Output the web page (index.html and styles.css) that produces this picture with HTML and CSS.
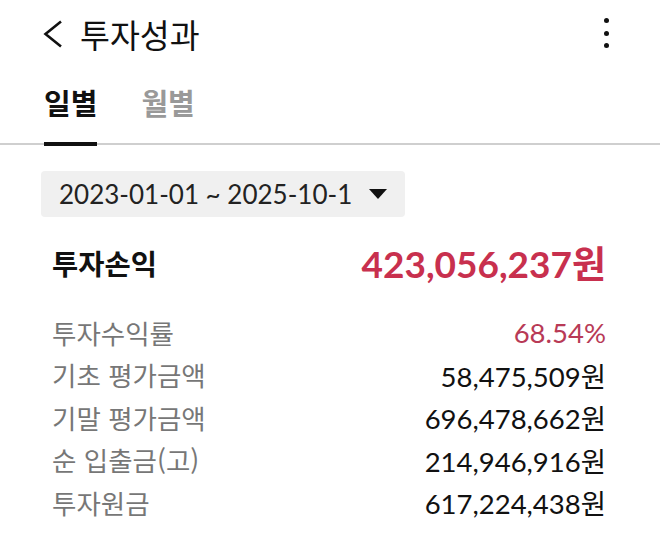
FILE: index.html
```html
<!DOCTYPE html>
<html lang="ko">
  <head>
    <meta charset="UTF-8" />
    <meta name="viewport" content="width=device-width, initial-scale=1.0" />
    <title>투자성과</title>
    <link rel="stylesheet" href="styles.css">
  </head>
  <body>
    <header class="top-bar">
      <button class="icon-btn back" type="button" aria-label="뒤로">
        <svg width="22" height="28" viewBox="0 0 22 28">
          <path d="M19 1.5 L3.5 14 L19 26.5" fill="none" stroke="#111" stroke-width="2.6" />
        </svg>
      </button>
      <h1 class="title">투자성과</h1>
      <button class="icon-btn more" type="button" aria-label="더보기">
        <span></span><span></span><span></span>
      </button>
    </header>

    <nav class="tabs">
      <a class="tab active" href="#">일별</a>
      <a class="tab" href="#">월별</a>
    </nav>

    <main class="content">
      <div class="period">
        <span class="period-text">2023-01-01 ~ 2025-10-1</span>
        <span class="caret"></span>
      </div>

      <div class="summary">
        <span class="summary-label">투자손익</span>
        <span class="summary-value">423,056,237원</span>
      </div>

      <ul class="stats">
        <li><span class="label">투자수익률</span><span class="value rate">68.54%</span></li>
        <li><span class="label">기초 평가금액</span><span class="value">58,475,509원</span></li>
        <li><span class="label">기말 평가금액</span><span class="value">696,478,662원</span></li>
        <li><span class="label">순 입출금(고)</span><span class="value">214,946,916원</span></li>
        <li><span class="label">투자원금</span><span class="value">617,224,438원</span></li>
      </ul>
    </main>
  </body>
</html>
```

FILE: styles.css
```css
body {
  font-family: Lato, "Noto Sans CJK KR", sans-serif;
  background-color: #ffffff;
  color: #111;
  margin: 0;
  width: 660px;
}
.top-bar {
  display: flex;
  align-items: center;
  height: 70px;
  padding: 0 50px 0 42px;
}
.icon-btn {
  background: none;
  border: none;
  padding: 0;
  cursor: pointer;
}
.back {
  display: flex;
  width: 22px;
  height: 28px;
  margin-bottom: 2px;
}
.title {
  font-family: "Noto Sans CJK KR", sans-serif;
  font-size: 32.5px;
  font-weight: 400;
  margin: 0 0 4px 16px;
  flex: 1;
}
.more {
  display: flex;
  flex-direction: column;
  gap: 7.5px;
  width: 6px;
  margin-bottom: 4px;
}
.more span {
  width: 5px;
  height: 5px;
  border-radius: 50%;
  background-color: #111;
}
.tabs {
  display: flex;
  gap: 44px;
  padding: 0 0 0 44px;
  border-bottom: 2px solid #cfcfcf;
  height: 75px;
  box-sizing: border-box;
}
.tab {
  font-family: "Noto Sans CJK KR", sans-serif;
  font-size: 29px;
  font-weight: 700;
  color: #999;
  text-decoration: none;
  padding-top: 11px;
  margin-bottom: -3px;
}
.tab.active {
  color: #111;
  border-bottom: 4px solid #111;
}
.content {
  padding: 26px 54px 0 41px;
}
.period {
  display: inline-flex;
  align-items: center;
  gap: 17px;
  height: 46px;
  padding: 0 18px;
  background-color: #f0f0f0;
  border-radius: 4px;
}
.period-text {
  font-size: 26px;
  color: #222;
}
.caret {
  width: 0;
  height: 0;
  border-left: 9px solid transparent;
  border-right: 9px solid transparent;
  border-top: 10px solid #111;
}
.summary {
  display: flex;
  justify-content: space-between;
  align-items: center;
  padding: 18px 0 0 11px;
}
.summary-label {
  font-family: "Noto Sans CJK KR", sans-serif;
  font-size: 28.5px;
  font-weight: 700;
}
.summary-value {
  font-size: 37px;
  font-weight: 700;
  color: #c8304e;
}
.stats {
  list-style: none;
  margin: 22px 0 0;
  padding: 0 0 0 11px;
}
.stats li {
  display: flex;
  justify-content: space-between;
  align-items: center;
  height: 42.5px;
}
.label {
  font-family: "Noto Sans CJK KR", sans-serif;
  font-size: 26.5px;
  color: #777;
}
.value {
  font-size: 27.5px;
  color: #111;
}
.value.rate {
  color: #b83a56;
}
```
